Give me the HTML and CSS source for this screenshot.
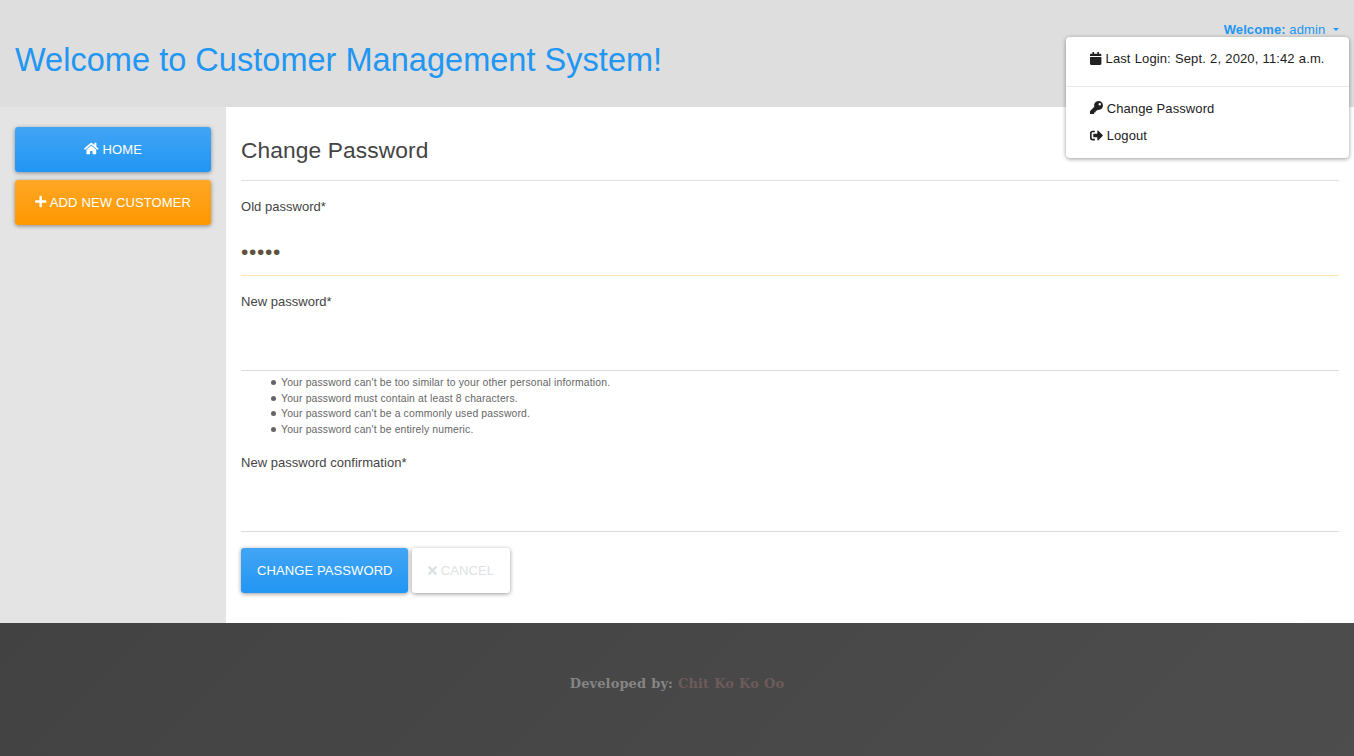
FILE: index.html
```html
<!DOCTYPE html>
<html lang="en">
<head>
<meta charset="utf-8">
<title>Customer Management System</title>
<link rel="stylesheet" href="styles.css">
</head>
<body>
<header class="header">
  <h1 class="title">Welcome to Customer Management System!</h1>
  <div class="user">
    <a class="user-toggle"><b>Welcome:</b> admin <span class="caret"></span></a>
    <div class="menu">
      <div class="menu-item login"><svg class="icon w14" viewBox="0 0 448 512"><path d="M12 192h424c6.600 0 12 5.400 12 12v260c0 26.500-21.500 48-48 48H48c-26.500 0-48-21.500-48-48V204c0-6.600 5.400-12 12-12zm436-44v-36c0-26.500-21.500-48-48-48h-48V12c0-6.600-5.400-12-12-12h-40c-6.600 0-12 5.400-12 12v52H160V12c0-6.600-5.400-12-12-12h-40c-6.600 0-12 5.400-12 12v52H48C21.500 64 0 85.500 0 112v36c0 6.600 5.400 12 12 12h424c6.600 0 12-5.400 12-12z"/></svg> Last Login: Sept. 2, 2020, 11:42 a.m.</div>
      <div class="divider"></div>
      <div class="menu-item"><svg class="icon raised w16" viewBox="0 0 512 512"><path d="M512 176c0 97.200-78.800 176-176 176-11.200 0-22.200-1.100-32.800-3.100l-24 27A24 24 0 0 1 261.200 384H224v40c0 13.300-10.700 24-24 24h-40v40c0 13.300-10.700 24-24 24H24c-13.300 0-24-10.700-24-24v-78.100c0-6.400 2.500-12.500 7-17l161.800-161.800A176 176 0 0 1 336 0c97.500 0 176 78.500 176 176zM336 128a48 48 0 1 0 96 0 48 48 0 1 0-96 0z"/></svg> Change Password</div>
      <div class="menu-item"><svg class="icon w16" viewBox="0 0 512 512"><path d="M497 273L329 441c-15 15-41 4.500-41-17v-96H152c-13.300 0-24-10.700-24-24v-96c0-13.300 10.700-24 24-24h136V88c0-21.400 25.900-32 41-17l168 168c9.300 9.400 9.300 24.600 0 34zM192 436v-40c0-6.600-5.400-12-12-12H96c-17.700 0-32-14.300-32-32V160c0-17.700 14.300-32 32-32h84c6.600 0 12-5.400 12-12V76c0-6.600-5.400-12-12-12H96c-53 0-96 43-96 96v192c0 53 43 96 96 96h84c6.600 0 12-5.400 12-12z"/></svg> Logout</div>
    </div>
  </div>
</header>
<div class="layout">
  <nav class="sidebar">
    <a class="btn primary"><svg class="icon raised w18" viewBox="0 0 576 512"><path d="M280.400 148.300L96 300.100V464a16 16 0 0 0 16 16l112.100-.3a16 16 0 0 0 15.900-16V368a16 16 0 0 1 16-16h64a16 16 0 0 1 16 16v95.600a16 16 0 0 0 16 16.100L464 480a16 16 0 0 0 16-16V300L295.700 148.300a12.200 12.200 0 0 0-15.300 0zM571.600 251.500L488 182.600V44.100a12 12 0 0 0-12-12h-56a12 12 0 0 0-12 12v72.600L318.500 43a48 48 0 0 0-61 0L4.300 251.500a12 12 0 0 0-1.600 16.900l25.500 31A12 12 0 0 0 45.200 301l235.200-193.700a12.200 12.200 0 0 1 15.300 0L530.900 301a12 12 0 0 0 16.900-1.600l25.500-31a12 12 0 0 0-1.700-16.900z"/></svg> Home</a>
    <a class="btn warning"><svg class="icon raised w14" viewBox="0 0 448 512"><path d="M416 208H272V64c0-17.700-14.300-32-32-32h-32c-17.700 0-32 14.300-32 32v144H32c-17.700 0-32 14.300-32 32v32c0 17.700 14.300 32 32 32h144v144c0 17.700 14.300 32 32 32h32c17.700 0 32-14.300 32-32V304h144c17.700 0 32-14.300 32-32v-32c0-17.700-14.300-32-32-32z"/></svg> Add New Customer</a>
  </nav>
  <main class="content">
    <h3 class="heading">Change Password</h3>
    <form class="form">
      <div class="group">
        <label class="label" for="old">Old password*</label>
        <input class="input filled" id="old" type="password" value="admin">
      </div>
      <div class="group">
        <label class="label" for="new1">New password*</label>
        <input class="input" id="new1" type="password">
        <ul class="hints">
          <li>Your password can't be too similar to your other personal information.</li>
          <li>Your password must contain at least 8 characters.</li>
          <li>Your password can't be a commonly used password.</li>
          <li>Your password can't be entirely numeric.</li>
        </ul>
      </div>
      <div class="group">
        <label class="label" for="new2">New password confirmation*</label>
        <input class="input" id="new2" type="password">
      </div>
      <div class="actions">
        <a class="btn primary">Change Password</a>
        <a class="btn light"><svg class="icon w11" viewBox="0 0 352 512"><path d="M242.700 256l100.100-100.100c12.300-12.300 12.300-32.200 0-44.500l-22.200-22.200c-12.300-12.300-32.200-12.300-44.500 0L176 189.300 75.900 89.200c-12.300-12.300-32.200-12.300-44.500 0L9.200 111.500c-12.300 12.300-12.300 32.200 0 44.500L109.300 256 9.200 356.100c-12.300 12.300-12.300 32.200 0 44.500l22.200 22.200c12.300 12.300 32.200 12.300 44.500 0L176 322.700l100.100 100.100c12.300 12.300 32.200 12.300 44.500 0l22.200-22.200c12.300-12.300 12.300-32.200 0-44.500L242.700 256z"/></svg> Cancel</a>
      </div>
    </form>
  </main>
</div>
<footer class="footer"><b>Developed by: <span class="author">Chit Ko Ko Oo</span></b></footer>
</body>
</html>
```
FILE: styles.css
```css
* { box-sizing: border-box; }
body {
  margin: 0;
  min-height: 756px;
  display: flex;
  flex-direction: column;
  font: 13px/1.5 "Liberation Sans", Arial, sans-serif;
  letter-spacing: 0.1px;
  color: #444;
  background: #fff;
}
.header {
  display: flex;
  justify-content: space-between;
  height: 107px;
  padding: 20px 15px 0;
  background: #dedede;
}
.title {
  margin: 21px 0 0;
  font-size: 32.500px;
  font-weight: 400;
  line-height: 39px;
  letter-spacing: 0.030px;
  color: #2196f3;
}
.user { position: relative; }
.user-toggle { display: block; color: #2196f3; white-space: pre; }
.caret {
  display: inline-block;
  margin-left: 4px;
  vertical-align: 3px;
  border: 3px solid transparent;
  border-top-color: currentColor;
  border-bottom: 0;
}
.menu {
  position: absolute;
  top: 17px;
  right: -10px;
  width: 283px;
  height: 121px;
  padding: 8px 0;
  border-radius: 4px;
  background: #fff;
  box-shadow: 0 1px 4px rgba(0, 0, 0, 0.4);
  color: #212121;
  white-space: nowrap;
}
.menu-item { height: 27px; padding: 4px 24px; }
.login { word-spacing: 0.5px; }
.divider { margin: 14px 0 8px; border-top: 1px solid #eaeaea; }
.icon {
  height: 13px;
  overflow: visible;
  fill: currentColor;
  vertical-align: -1.6px;
}
.raised { margin-top: -2px; vertical-align: -0.6px; }
.w11 { width: 8.940px; }
.w14 { width: 11.380px; }
.w16 { width: 13px; }
.w18 { width: 14.630px; }
.layout { display: flex; height: 516px; }
.sidebar {
  display: flex;
  flex-direction: column;
  gap: 8px;
  width: 226px;
  padding: 20px 15px;
  background: #e4e4e4;
}
.btn {
  display: block;
  height: 45px;
  padding: 13px 16px;
  border-radius: 3px;
  box-shadow: 0 1px 4px rgba(0, 0, 0, 0.4);
  color: #fff;
  text-align: center;
  text-transform: uppercase;
  white-space: nowrap;
}
.sidebar .btn { word-spacing: 0.3px; }
.primary { background: linear-gradient(#42a5f5, #2196f3); }
.warning { background: linear-gradient(#ffa726, #ff9800); }
.light { background: #fff; color: #dee2e6; }
.content { flex: 1; padding: 30px 15px 0; }
.heading {
  height: 44px;
  margin: 0 0 16px;
  border-bottom: 1px solid #e0e0e0;
  font-size: 22.750px;
  font-weight: 400;
  line-height: 27px;
  letter-spacing: 0.1px;
}
.group { margin-bottom: 16px; }
.label { display: block; height: 27px; letter-spacing: 0.030px; }
.input {
  display: block;
  width: 100%;
  height: 52px;
  padding: 4px 0 0;
  border: 0;
  border-bottom: 1px solid #dcdcdc;
  outline: 0;
  background: transparent;
  color: #5f533f;
  font: 21px "Liberation Sans", Arial, sans-serif;
  letter-spacing: 0.650px;
}
.filled { border-bottom-color: #ffe6ab; }
.hints {
  margin: 4px 0 0;
  padding-left: 30px;
  list-style: none;
  font-size: 10.400px;
  line-height: 15.600px;
  letter-spacing: 0.150px;
  color: #666;
}
.hints li { display: flex; align-items: center; }
.hints li::before {
  content: "";
  flex: none;
  width: 5px;
  height: 5px;
  margin-right: 5px;
  border-radius: 50%;
  background: #666;
}
.actions { display: flex; gap: 4px; }
.actions .primary { width: 167px; }
.actions .light { width: 98px; }
.footer {
  flex: 1;
  padding-top: 51px;
  background: linear-gradient(135deg, #424242, #4d4d4d);
  color: #858585;
  font-family: "DejaVu Serif", serif;
  word-spacing: 0.4px;
  text-align: center;
}
.author { color: #6d5b5b; }
```
